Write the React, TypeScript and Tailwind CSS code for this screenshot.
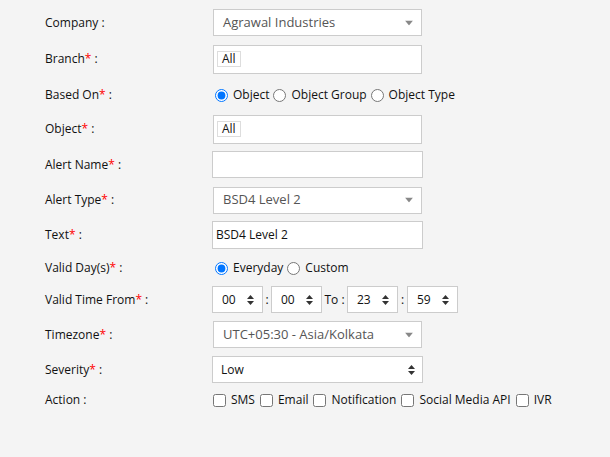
import React from "react";

const font = { fontFamily: '"Open Sans", "Noto Sans", sans-serif' };

function Label({ text, req }: { text: string; req?: boolean }) {
  return (
    <div className="w-[167px] shrink-0 text-[12px] text-[#111]">
      {text}
      {req && <span className="text-[#ff0000]">*</span>} :
    </div>
  );
}

function Caret() {
  return (
    <svg width="8" height="5" viewBox="0 0 8 5" className="absolute right-[8px] top-1/2 -translate-y-1/2">
      <path d="M0 0h8L4 5z" fill="#888" />
    </svg>
  );
}

function UpDown({ className }: { className: string }) {
  return (
    <svg width="7" height="10" viewBox="0 0 7 10" className={className}>
      <path d="M0 4L3.5 0L7 4z" fill="#333" />
      <path d="M0 6L3.5 10L7 6z" fill="#333" />
    </svg>
  );
}

function Select2({ value }: { value: string }) {
  return (
    <div className="relative ml-[1px] flex h-[27px] w-[209px] items-center border border-[#ccc] bg-white pl-[9px] text-[13px] text-[#555]">
      {value}
      <Caret />
    </div>
  );
}

function TagBox() {
  return (
    <div className="ml-[1px] flex h-[29px] w-[209px] items-center border border-[#ccc] bg-white pl-[3px]">
      <span className="flex h-[16px] items-center border border-[#ddd] px-[4px] text-[12px] text-[#111]">All</span>
    </div>
  );
}

function TimeBox({ value }: { value: string }) {
  return (
    <div className="relative flex h-[27px] w-[51px] items-center border border-[#ccc] bg-white pl-[9px] text-[12px] text-[#111]">
      {value}
      <UpDown className="absolute right-[8px] top-1/2 -translate-y-1/2" />
    </div>
  );
}

function Radio({ label, checked, name }: { label: string; checked?: boolean; name: string }) {
  return (
    <label className="flex items-center text-[12px] text-[#111]">
      <input type="radio" name={name} defaultChecked={checked} className="m-0 ml-[3px] mr-[5px] h-[13px] w-[13px] accent-[#0075ff]" />
      <span className="mr-[1px]">{label}</span>
    </label>
  );
}

function Check({ label }: { label: string }) {
  return (
    <label className="flex items-center text-[12px] text-[#111]">
      <input type="checkbox" className="m-0 mr-[5px] h-[13px] w-[13px]" />
      <span className="mr-[5px]">{label}</span>
    </label>
  );
}

export default function App() {
  return (
    <div className="h-[457px] w-[610px] bg-[#f4f4f4] pl-[45px] pt-[5px]" style={font}>
      <div className="flex h-[35px] items-center">
        <Label text="Company" />
        <Select2 value="Agrawal Industries" />
      </div>
      <div className="flex h-[38px] items-center">
        <Label text="Branch" req />
        <TagBox />
      </div>
      <div className="flex h-[34px] items-center">
        <Label text="Based On" req />
        <div className="flex items-center">
          <Radio name="based" label="Object" checked />
          <Radio name="based" label="Object Group" />
          <Radio name="based" label="Object Type" />
        </div>
      </div>
      <div className="flex h-[34px] items-center">
        <Label text="Object" req />
        <TagBox />
      </div>
      <div className="flex h-[37px] items-center">
        <Label text="Alert Name" req />
        <div className="h-[27px] w-[211px] border border-[#ccc] bg-white" />
      </div>
      <div className="flex h-[34px] items-center">
        <Label text="Alert Type" req />
        <Select2 value="BSD4 Level 2" />
      </div>
      <div className="flex h-[35px] items-center">
        <Label text="Text" req />
        <div className="flex h-[28px] w-[211px] items-center border border-[#ccc] bg-white pl-[3px] text-[12px] text-[#111]">
          BSD4 Level 2
        </div>
      </div>
      <div className="flex h-[32px] items-center">
        <Label text="Valid Day(s)" req />
        <div className="flex items-center">
          <Radio name="days" label="Everyday" checked />
          <Radio name="days" label="Custom" />
        </div>
      </div>
      <div className="flex h-[31px] items-center">
        <Label text="Valid Time From" req />
        <div className="flex items-center text-[12px] text-[#111]">
          <TimeBox value="00" />
          <span className="w-[8px] text-center">:</span>
          <TimeBox value="00" />
          <span className="w-[25px] text-center">To :</span>
          <TimeBox value="23" />
          <span className="w-[9px] text-center">:</span>
          <TimeBox value="59" />
        </div>
      </div>
      <div className="flex h-[39px] items-center">
        <Label text="Timezone" req />
        <Select2 value="UTC+05:30 - Asia/Kolkata" />
      </div>
      <div className="flex h-[31px] items-center">
        <Label text="Severity" req />
        <div className="relative flex h-[27px] w-[211px] items-center border border-[#ccc] bg-white pl-[8px] text-[12px] text-[#111]">
          Low
          <UpDown className="absolute right-[7px] top-1/2 -translate-y-1/2" />
        </div>
      </div>
      <div className="flex h-[30px] items-center">
        <Label text="Action" />
        <div className="ml-[1px] flex items-center">
          <Check label="SMS" />
          <Check label="Email" />
          <Check label="Notification" />
          <Check label="Social Media API" />
          <Check label="IVR" />
        </div>
      </div>
    </div>
  );
}
